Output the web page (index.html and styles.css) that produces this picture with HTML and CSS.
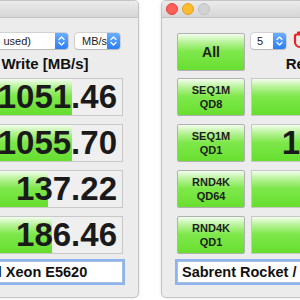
FILE: index.html
```html
<!DOCTYPE html>
<html lang="en">
	<head>
		<meta charset="utf-8">
		<title>CrystalDiskMark • Compare</title>
		<link rel="stylesheet" href="styles.css">
	</head>
	<body>
		<div class="window window-left">
			<div class="titlebar"></div>
			<div class="content content-left">
				<div class="head-col">
					<div class="toolbar">
						<div class="select select-drive">
							<span class="select-text">C: 41% (98/237GiB used)</span>
							<span class="select-arrow"><svg viewBox="0 0 13 16"><path d="M4 6.5 6.5 4 9 6.5M4 9.5 6.5 12 9 9.5"/></svg></span>
						</div>
						<div class="select select-unit">
							<span class="select-text">MB/s</span>
							<span class="select-arrow"><svg viewBox="0 0 13 16"><path d="M4 6.5 6.5 4 9 6.5M4 9.5 6.5 12 9 9.5"/></svg></span>
						</div>
					</div>
					<div class="col-label">Write [MB/s]</div>
				</div>
				<div class="row"><div class="cell" style="--fill:104px">1051.46</div></div>
				<div class="row"><div class="cell" style="--fill:104px">1055.70</div></div>
				<div class="row"><div class="cell" style="--fill:80px">137.22</div></div>
				<div class="row"><div class="cell" style="--fill:84px">186.46</div></div>
				<div class="field field-left">Intel Xeon E5620</div>
			</div>
		</div>

		<div class="window window-right">
			<div class="titlebar">
				<span class="light red"></span>
				<span class="light yellow"></span>
				<span class="light grey"></span>
			</div>
			<div class="content">
				<div class="row row-head">
					<div class="btn btn-all">All</div>
					<div class="head-col">
						<div class="toolbar toolbar-start">
							<div class="select select-count">
								<span class="select-text">5</span>
								<span class="select-arrow"><svg viewBox="0 0 13 16"><path d="M4 6.5 6.5 4 9 6.5M4 9.5 6.5 12 9 9.5"/></svg></span>
							</div>
							<svg class="stop-icon" viewBox="0 0 18 20"><path d="M5 3.5h8M3.5 5.5h11a1.5 1.5 0 0 1 1.5 1.5v6a5 5 0 0 1-5 5H7a5 5 0 0 1-5-5V7a1.5 1.5 0 0 1 1.5-1.5z"/></svg>
						</div>
						<div class="col-label">Read [MB/s]</div>
					</div>
				</div>
				<div class="row">
					<div class="btn">SEQ1M<br>QD8</div>
					<div class="cell" style="--fill:150px">985.42</div>
				</div>
				<div class="row">
					<div class="btn">SEQ1M<br>QD1</div>
					<div class="cell" style="--fill:140px">1528.09</div>
				</div>
				<div class="row">
					<div class="btn">RND4K<br>QD64</div>
					<div class="cell" style="--fill:120px">52.18</div>
				</div>
				<div class="row">
					<div class="btn">RND4K<br>QD1</div>
					<div class="cell" style="--fill:110px">41.37</div>
				</div>
				<div class="field field-right">Sabrent Rocket / MacPro5,1</div>
			</div>
		</div>
	</body>
</html>
```

FILE: styles.css
```css
html
{
	font-family: "Liberation Sans", Arial, sans-serif;
}

body
{
	margin: 0;
	background: #fff;
	overflow: hidden;
	width: 300px;
	height: 300px;
	position: relative;
}

/* windows sit on a free desktop */
.window
{
	position: absolute;
	top: 0;
	height: 298px;
	box-sizing: border-box;
	background: #ececec;
	border: 1px solid #c4c4c4;
	border-radius: 5px;
	box-shadow: 0 0 3px rgba(0, 0, 0, 0.12);
	overflow: hidden;
}

.window-left
{
	left: -200px;
	width: 339px;
}

.window-right
{
	left: 161px;
	width: 320px;
}

.titlebar
{
	height: 16px;
	background: linear-gradient(#ebebeb, #d6d6d6);
	border-bottom: 1px solid #c2c2c2;
	display: flex;
	align-items: center;
	gap: 4px;
	padding-left: 4px;
}

.light
{
	width: 12px;
	height: 12px;
	box-sizing: border-box;
	border-radius: 50%;
}

.light.red
{
	background: #fc5f57;
	border: 1px solid #e0443e;
}

.light.yellow
{
	background: #fdbc2e;
	border: 1px solid #dea123;
}

.light.grey
{
	background: #d3d3d3;
	border: 1px solid #c0c0c0;
}

.content
{
	padding: 15px 15px 0;
	display: flex;
	flex-direction: column;
}

.content-left
{
	align-items: flex-end;
}

.row
{
	display: flex;
	gap: 6px;
	margin-top: 8px;
}

.row-head
{
	margin-top: 0;
}

.content-left .head-col + .row,
.row-head + .row
{
	margin-top: 7px;
}

.head-col
{
	width: 156px;
	height: 38px;
	display: flex;
	flex-direction: column;
}

.toolbar
{
	display: flex;
	justify-content: flex-end;
	gap: 7px;
	padding-right: 3px;
}

.toolbar-start
{
	justify-content: flex-start;
	padding-right: 0;
}

.col-label
{
	margin-top: 7px;
	font-size: 15px;
	font-weight: bold;
	line-height: 16px;
	text-align: center;
	color: #111;
	white-space: nowrap;
}

.select
{
	display: flex;
	flex-shrink: 0;
	height: 16px;
	background: #fff;
	border-radius: 3px;
	box-shadow: 0 0 0 0.5px rgba(0, 0, 0, 0.22), 0 1px 1px rgba(0, 0, 0, 0.12);
	font-size: 11px;
	line-height: 16px;
	color: #222;
	overflow: hidden;
}

.select-text
{
	flex: 1;
	display: flex;
	justify-content: flex-end;
	padding: 0 24px 0 6px;
	white-space: nowrap;
	overflow: hidden;
}

.select-unit .select-text,
.select-count .select-text
{
	justify-content: flex-start;
	padding-right: 0;
}

.select-unit .select-text
{
	padding-left: 7px;
}

.select-drive
{
	width: 150px;
}

.select-unit
{
	width: 45px;
}

.select-count
{
	width: 35px;
}

.select-arrow
{
	width: 13px;
	flex-shrink: 0;
	background: linear-gradient(#69aefe, #2c7ef4);
	display: flex;
}

.select-arrow svg
{
	width: 13px;
	height: 16px;
	fill: none;
	stroke: #fff;
	stroke-width: 1.3;
	stroke-linecap: round;
	stroke-linejoin: round;
}

.stop-icon
{
	width: 18px;
	height: 20px;
	flex-shrink: 0;
	margin-top: -4px;
	fill: none;
	stroke: #f21d1d;
	stroke-width: 2.2;
	stroke-linecap: round;
}

.btn,
.cell
{
	height: 38px;
	box-sizing: border-box;
	border: 1px solid #c8c8c8;
}

.btn
{
	width: 68px;
	border-color: #b0b0b0;
	border-radius: 2px;
	background: linear-gradient(#f3fdef 0%, #b9f39a 22%, #7fe84c 48%, #68df30 100%);
	display: flex;
	align-items: center;
	justify-content: center;
	text-align: center;
	font-size: 11px;
	font-weight: bold;
	line-height: 14px;
	color: #1d1d1d;
}

.btn-all
{
	font-size: 14px;
}

.cell
{
	width: 156px;
	padding-right: 5px;
	background: linear-gradient(#f4fdf0 0%, #b7f296 22%, #7ee74b 48%, #66de2e 100%) no-repeat, #efefef;
	background-size: var(--fill) 100%, auto;
	font-size: 33px;
	font-weight: bold;
	line-height: 36px;
	text-align: right;
	color: #1a1a1a;
	white-space: nowrap;
	overflow: hidden;
}

.field
{
	margin-top: 7px;
	height: 22px;
	box-sizing: border-box;
	background: #fff;
	border: 1px solid #a9bfe0;
	box-shadow: 0 0 0 2px #8db3ee;
	padding-left: 4px;
	font-size: 14.5px;
	font-weight: bold;
	line-height: 20px;
	color: #111;
	white-space: nowrap;
	overflow: hidden;
}

.field-left
{
	width: 156px;
}

.field-right
{
	width: 230px;
}
```
